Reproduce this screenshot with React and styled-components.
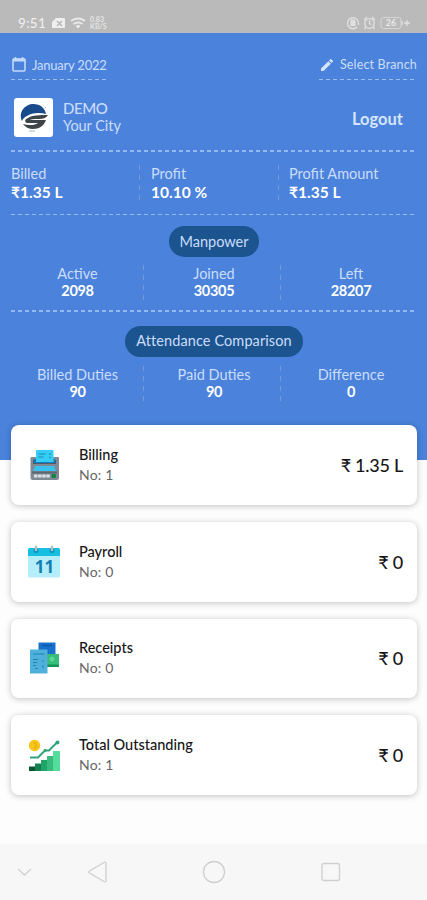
import React from "react";
import styled, { createGlobalStyle, css } from "styled-components";

const GlobalStyle = createGlobalStyle`
  * {
    box-sizing: border-box;
  }

  body {
    margin: 0;
    background: #fdfdfd;
    font-family: Lato, "Noto Sans", sans-serif;
  }
`;

const textStyles = css`
  font-size: ${(props) => props.$size || 14}px;
  line-height: ${(props) => props.$line || 18}px;
  font-weight: ${(props) => props.$weight || 400};
  letter-spacing: ${(props) => props.$spacing || 0}px;
  color: ${(props) => props.$color || "#cbddfb"};
  white-space: nowrap;
`;

const Text = styled.span`
  display: block;
  ${textStyles}
`;

const Screen = styled.div`
  display: flex;
  flex-direction: column;
  height: 900px;
  overflow: hidden;
`;

const StatusBar = styled.div`
  display: flex;
  flex: none;
  justify-content: space-between;
  height: 33px;
  padding: 14px 16px 0 18px;
  background: #bababa;
`;

const StatusGroup = styled.div`
  display: flex;
  align-items: center;
  gap: ${(props) => props.$gap}px;
  height: 18px;
`;

const NetSpeed = styled.div`
  width: 18px;
  font-size: 7px;
  line-height: 7px;
  font-weight: 700;
  color: #e4e4e4;
`;

const Header = styled.header`
  flex: none;
  height: 427px;
  padding: 20px 10px 0 11px;
  background: #4a82dc;
`;

const TopRow = styled.div`
  display: flex;
  justify-content: space-between;
`;

const Picker = styled.div`
  display: flex;
  align-items: center;
  gap: ${(props) => props.$gap}px;
  width: ${(props) => props.$width}px;
  height: 27px;
  padding: 0 0 4px;
  background: repeating-linear-gradient(90deg, #9dbdf0 0 4px, transparent 4px 7px) bottom / 100% 1.5px no-repeat;
`;

const Divider = styled.div`
  height: 1.5px;
  margin-right: 3px;
  background: repeating-linear-gradient(90deg, #96b8ee 0 4px, transparent 4px 7px);
`;

const Profile = styled.div`
  display: flex;
  align-items: center;
  height: 70px;
  padding: 4px 14px 0 3px;
`;

const LogoBox = styled.div`
  width: 39px;
  height: 39px;
  margin-right: 10px;
  border-radius: 3px;
  background: #ffffff;
`;

const Logout = styled.button`
  margin-left: auto;
  padding: 3px 0 0;
  border: 0;
  background: none;
  font-family: inherit;
  ${textStyles}
`;

const SummaryRow = styled.div`
  display: grid;
  grid-template-columns: 129px 139px 1fr;
  height: 62px;
  padding-top: 13px;
`;

const CountRow = styled.div`
  display: grid;
  grid-template-columns: 134px 137px 139px;
  margin-left: -1px;
  padding-top: ${(props) => props.$top}px;
`;

const Stat = styled.div`
  height: 35px;
  padding-left: ${(props) => props.$left || 0}px;
  text-align: ${(props) => props.$align || "left"};
  background: ${(props) =>
    props.$last
      ? "none"
      : "repeating-linear-gradient(#7799d5 0 5px, transparent 5px 10px) right / 1px 100% no-repeat"};
`;

const Section = styled.section`
  height: ${(props) => props.$height || 95}px;
  padding-top: ${(props) => props.$top}px;
`;

const Pill = styled.div`
  display: flex;
  align-items: center;
  justify-content: center;
  width: ${(props) => props.$width}px;
  height: 31px;
  margin: 0 auto;
  border-radius: 16px;
  background: #1c5490;
`;

const CardList = styled.main`
  position: relative;
  display: flex;
  flex: 1;
  flex-direction: column;
  gap: 17px;
  margin-top: -35px;
  padding: 0 10px 0 11px;
`;

const Card = styled.article`
  display: flex;
  align-items: center;
  height: 79.8px;
  padding: 0 14px 0 16px;
  border-radius: 8px;
  background: #ffffff;
  box-shadow: 0 1px 6px rgba(0, 0, 0, 0.24);
`;

const CardText = styled.div`
  flex: 1;
  margin-left: 18px;
`;

const NavBar = styled.nav`
  flex: none;
  height: 56px;
  background: #f7f7f7;
`;

const CalendarOutline = () => (
  <svg width="16" height="17" viewBox="0 0 16 17" fill="none" stroke="#c5d9f8">
    <rect x="2" y="3" width="12" height="12" rx="1" strokeWidth="1.6" />
    <path d="M2 4h12" strokeWidth="3" />
    <path d="M4.5 1v3M11.5 1v3" strokeWidth="1.5" />
  </svg>
);

const Pencil = () => (
  <svg width="16" height="16" viewBox="0 0 24 24" fill="#d5e4fc">
    <path d="M3 17.25V21h3.75L17.8 9.94l-3.75-3.75L3 17.25zM20.7 7.04a1 1 0 0 0 0-1.41l-2.34-2.34a1 1 0 0 0-1.41 0l-1.83 1.83 3.75 3.75 1.83-1.83z" />
  </svg>
);

const CompanyLogo = () => (
  <svg width="39" height="39" viewBox="0 0 39 39">
    <path d="M8 23C4 14 11 6 19.500 6c6.500 0 11.500 4 12.500 10-7-2-15-1-19 2-3 1-4 3-5 5z" fill="#174b8c" />
    <path d="M14 20c4-3 12-3 20-3-2 3-5 4-9 4-4 0-8 0-9 1h16c-2 6-7 9-13 9-4 0-8-2-10-5 6 2 13 1 15-1H13c-3-1-2-4 1-5z" fill="#3d4549" />
    <path d="M31 9l1 1M15 33h6" stroke="#a8b5c2" />
  </svg>
);

const BillingIcon = () => (
  <svg width="34" height="36" viewBox="0 0 34 36">
    <path d="M3.500 11a1 1 0 0 1 1-1h26.500a1 1 0 0 1 1 1v20a2 2 0 0 1-2 2H5.500a2 2 0 0 1-2-2z" fill="#808a94" />
    <path d="M6 13h23v4H6z" fill="#4b5d6c" />
    <path d="M7 12h21v4H7z" fill="#087fc4" />
    <path d="M9 3h17.500v12H9z" fill="#35cdf3" />
    <path d="M11.500 7h7M11.500 10h5M23 6v2M23 9.500v2" stroke="#168fbd" strokeWidth="1.2" />
    <path d="M8 19h19l2 5H6z" fill="#39c1f0" />
    <path d="M5 24.500h25v2H5z" fill="#5b6670" />
    <path d="M7 29h16" stroke="#dbe1e5" strokeWidth="3" strokeDasharray="3.500 .6" />
    <rect x="24.500" y="27" width="4.500" height="4" rx="1" fill="#168243" />
  </svg>
);

const PayrollIcon = () => (
  <svg width="34" height="36" viewBox="0 0 34 36">
    <path d="M1 12h32v20a1.500 1.500 0 0 1-1.500 1.500h-29A1.500 1.500 0 0 1 1 32z" fill="#b4eefb" />
    <path d="M1 5.500A1.500 1.500 0 0 1 2.500 4h29A1.500 1.500 0 0 1 33 5.500V12H1z" fill="#17bfe2" />
    <circle cx="9" cy="6.500" r="2.500" fill="#0793bd" />
    <circle cx="25" cy="6.500" r="2.500" fill="#0793bd" />
    <path d="M9 3v3M25 3v3" stroke="#b5bdc5" strokeWidth="2.500" strokeLinecap="round" />
    <text x="17.500" y="29" textAnchor="middle" fontSize="17" fontWeight="700" fontFamily="Open Sans" fill="#147eb2">11</text>
  </svg>
);

const ReceiptsIcon = () => (
  <svg width="34" height="36" viewBox="0 0 34 36">
    <path d="M11.500 2.500h17V17h-17z" fill="#1670cc" />
    <path d="M15 5.500h10" stroke="#0d59ae" strokeWidth="1.500" />
    <path d="M17 14h15v13H17z" fill="#35bd79" />
    <path d="M17 24.500h15V27H17z" fill="#159457" />
    <circle cx="25" cy="19" r="2.500" fill="#58d695" />
    <path d="M3 9.500h17.500v24H3z" fill="#4fb0da" />
    <path d="M6 14h11.500M6 19.500h5M6 22.500h4M6 25.500h3M8 28.500h3M16 20v2M16 25v3" stroke="#2383b5" />
  </svg>
);

const OutstandingIcon = () => (
  <svg width="34" height="36" viewBox="0 0 34 36">
    <circle cx="7.500" cy="8.500" r="5.700" fill="#f7c51b" />
    <path d="M6 6h3v5H7" fill="none" stroke="#dda812" />
    <path d="M2 29.500h7V34H2z" fill="#0a5735" />
    <path d="M8 26.500h7V34H8z" fill="#168052" />
    <path d="M14 23h7v11h-7z" fill="#20a568" />
    <path d="M20 19h7v15h-7z" fill="#37ba7b" />
    <path d="M26 14h7v20h-7z" fill="#53dc9b" />
    <path d="M3 20.500h8l7-7h4l8-8" fill="none" stroke="#31a27a" strokeWidth="2" />
    <circle cx="30.500" cy="5.500" r="2" fill="#31a27a" />
    <circle cx="18" cy="13.500" r="1.400" fill="#31a27a" />
  </svg>
);

const StatusLeftIcons = () => (
  <svg width="34" height="14" viewBox="0 0 34 14">
    <path d="M5 2h8q1 0 1 1v8q0 1-1 1H1V6z" fill="#eeeeee" />
    <path d="M6 5l5 5M11 5l-5 5" stroke="#b5b5b5" strokeWidth="1.4" />
    <g fill="none" stroke="#e9e9e9" strokeWidth="2">
      <path d="M20 5q7-5 14 0M22.5 8q4.5-3 9 0" />
      <path d="M25 10q2-1 4 0l-2 2z" fill="#ededed" strokeWidth="1" />
    </g>
  </svg>
);

const StatusRightIcons = () => (
  <svg width="65" height="16" viewBox="0 0 65 16" fill="none" stroke="#e1e1e1" strokeWidth="1.3">
    <path d="M11 12a5.5 5.5 0 1 1 1.5-4v2" />
    <rect x="5" y="6.5" width="4" height="4" fill="#e1e1e1" />
    <path d="M5.5 6.5V5h3v1.5" />
    <circle cx="23.5" cy="8.5" r="4.8" />
    <path d="M23.5 5.5v3l2 1M18 5l3-3M29 5l-3-3M20 12l-1.5 2M27 12l1.5 2" />
    <rect x="35" y="2.5" width="20" height="11" rx="2.5" strokeWidth="1" stroke="#d7d7d7" />
    <text x="45" y="11.2" textAnchor="middle" fontSize="9" fontWeight="700" fill="#e9e9e9" stroke="none">26</text>
    <path d="M56 6v4M58 8h6M61 5v6" />
  </svg>
);

const NavIcons = () => (
  <svg width="427" height="56" viewBox="0 0 427 56" fill="none" stroke="#cfcfcf" strokeWidth="1.3" strokeLinejoin="round">
    <path d="M18 25l6.5 6 6.5-6" />
    <path d="M89.5 27q-1.5 1 0 2l14.5 8.5q2 1 2-1v-17q0-2-2-1z" />
    <circle cx="214" cy="28" r="10.5" />
    <rect x="322" y="19.5" width="17.5" height="17" rx="2" />
  </svg>
);

const summary = [
  { label: "Billed", value: "₹1.35 L", left: 0 },
  { label: "Profit", value: "10.10 %", left: 11 },
  { label: "Profit Amount", value: "₹1.35 L", left: 10 },
];

const manpower = [
  { label: "Active", value: "2098" },
  { label: "Joined", value: "30305" },
  { label: "Left", value: "28207" },
];

const attendance = [
  { label: "Billed Duties", value: "90" },
  { label: "Paid Duties", value: "90" },
  { label: "Difference", value: "0" },
];

const cards = [
  { title: "Billing", count: 1, amount: "₹ 1.35 L", Icon: BillingIcon },
  { title: "Payroll", count: 0, amount: "₹ 0", Icon: PayrollIcon },
  { title: "Receipts", count: 0, amount: "₹ 0", Icon: ReceiptsIcon },
  { title: "Total Outstanding", count: 1, amount: "₹ 0", Icon: OutstandingIcon },
];

const Counts = ({ items, top }) => (
  <CountRow $top={top}>
    {items.map((item, i) => (
      <Stat key={item.label} $left={i === 1 ? 3 : 1} $align="center" $last={i === items.length - 1}>
        <Text $size={14.5} $line={17}>{item.label}</Text>
        <Text $size={14.5} $weight={700} $line={17} $spacing={-0.3} $color="#ffffff">{item.value}</Text>
      </Stat>
    ))}
  </CountRow>
);

const App = () => (
  <>
    <GlobalStyle />
    <Screen>
      <StatusBar>
        <StatusGroup $gap={5}>
          <Text $size={13.5} $weight={500} $color="#eeeeee" $spacing={0.3}>9:51</Text>
          <StatusLeftIcons />
          <NetSpeed>0.83 KB/S</NetSpeed>
        </StatusGroup>
        <StatusGroup $gap={0}>
          <StatusRightIcons />
        </StatusGroup>
      </StatusBar>

      <Header>
        <TopRow>
          <Picker $gap={5} $width={97}>
            <CalendarOutline />
            <Text $size={13} $spacing={-0.22}>January 2022</Text>
          </Picker>
          <Picker $gap={5} $width={98}>
            <Pencil />
            <Text $size={12.5} $spacing={0.15}>Select Branch</Text>
          </Picker>
        </TopRow>

        <Profile>
          <LogoBox>
            <CompanyLogo />
          </LogoBox>
          <div>
            <Text $size={15} $line={17} $weight={500} $spacing={-0.4}>DEMO</Text>
            <Text $size={14.5} $line={17} $spacing={-0.05}>Your City</Text>
          </div>
          <Logout $size={16.5} $weight={700} $color="#d6e4fc">Logout</Logout>
        </Profile>

        <Divider />
        <SummaryRow>
          {summary.map((item, i) => (
            <Stat key={item.label} $left={item.left} $last={i === 2}>
              <Text $size={14.5}>{item.label}</Text>
              <Text $size={15.5} $weight={700} $color="#ffffff">{item.value}</Text>
            </Stat>
          ))}
        </SummaryRow>
        <Divider />

        <Section $top={11}>
          <Pill $width={90}>
            <Text $size={14.5}>Manpower</Text>
          </Pill>
          <Counts items={manpower} top={8} />
        </Section>
        <Divider />

        <Section $top={14}>
          <Pill $width={178}>
            <Text $size={14.5} $spacing={0.1}>Attendance Comparison</Text>
          </Pill>
          <Counts items={attendance} top={9} />
        </Section>
      </Header>

      <CardList>
        {cards.map(({ title, count, amount, Icon }) => (
          <Card key={title}>
            <Icon />
            <CardText>
              <Text $size={14.5} $line={20} $weight={500} $color="#161616">{title}</Text>
              <Text $size={14} $line={20} $spacing={0.2} $color="#666666">No: {count}</Text>
            </CardText>
            <Text $size={18} $line={22} $weight={500} $spacing={-0.25} $color="#161616">{amount}</Text>
          </Card>
        ))}
      </CardList>

      <NavBar>
        <NavIcons />
      </NavBar>
    </Screen>
  </>
);

export default App;
